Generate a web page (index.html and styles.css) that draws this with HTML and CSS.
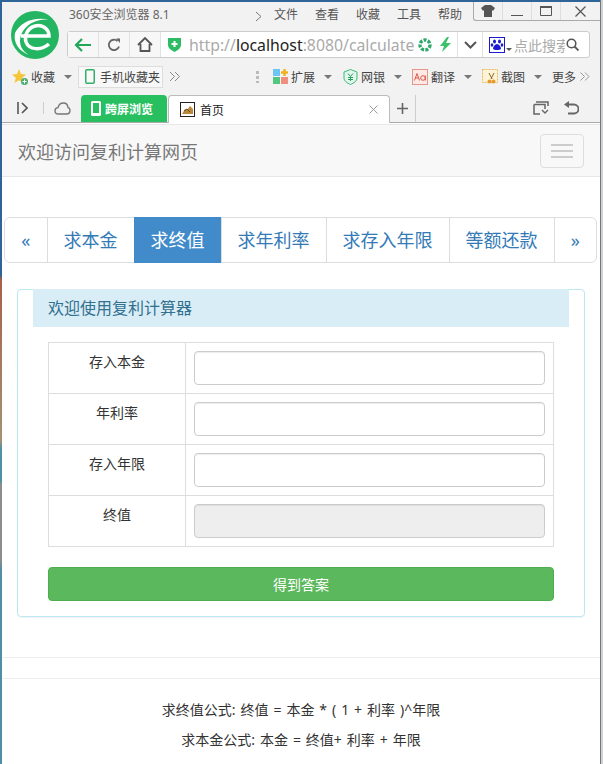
FILE: index.html
```html
<!DOCTYPE html>
<html lang="zh-CN">
<head>
    <meta charset="UTF-8">
    <meta name="viewport" content="width=device-width, initial-scale=1.0">
    <title>欢迎访问复利计算网页</title>
    <link rel="stylesheet" href="styles.css">
</head>
<body>
    <div class="edge-left"></div>
    <div class="window">
        <div class="chrome">
            <div class="top-area">
                <svg class="logo" width="48" height="48" viewBox="0 0 48 48">
                    <circle cx="24" cy="24" r="24" fill="#23b561"/>
                    <path d="M4 22C10 10 24 5 40 9C28 7 15 12 10 24C7 33 11 40 18 44C8 40 2 32 4 22Z" fill="#fff"/>
                    <path d="M10 25H38C38 17 30 13 24 15C17 17 13 24 15 31C18 39 30 40 38 33" fill="none" stroke="#fff" stroke-width="3.500"/>
                </svg>
                <div class="top-rows">
                    <div class="title-row">
                        <span class="app-name">360安全浏览器 8.1</span>
                        <span class="menu-arrow">
                            <svg width="7" height="11" viewBox="0 0 7 11"><path d="M1 1l5 4.500-5 4.500" fill="none" stroke="#777"/></svg>
                        </span>
                        <nav class="menu">
                            <span>文件</span><span>查看</span><span>收藏</span><span>工具</span><span>帮助</span>
                        </nav>
                        <div class="win-btns">
                            <div class="win-btn">
                                <svg width="14" height="12" viewBox="0 0 14 12"><path d="M4 0h6l4 3-2 3-1-1v7H3V5L2 6 0 3z" fill="#555"/></svg>
                            </div>
                            <div class="win-btn">
                                <svg width="14" height="12" viewBox="0 0 14 12"><path d="M1 10.500h12" stroke="#555"/></svg>
                            </div>
                            <div class="win-btn">
                                <svg width="14" height="12" viewBox="0 0 14 12"><path d="M1.500 1.500h11v9h-11z" fill="none" stroke="#555"/><path d="M1 2h12" stroke="#555" stroke-width="2"/></svg>
                            </div>
                            <div class="win-btn win-close">
                                <svg width="13" height="13" viewBox="0 0 13 13"><path d="M1.500 1.500l10 10M11.500 1.500l-10 10" stroke="#555" stroke-width="1.200"/></svg>
                            </div>
                        </div>
                    </div>
                    <div class="address-bar">
                        <div class="addr-btn">
                            <svg width="18" height="16" viewBox="0 0 18 16"><path d="M17 8H2M8 2L2 8l6 6" fill="none" stroke="#23a55a" stroke-width="2.200"/></svg>
                        </div>
                        <div class="addr-btn">
                            <svg width="14" height="14" viewBox="0 0 14 14"><path d="M12 8.500A5.200 5.200 0 1 1 10.500 3" fill="none" stroke="#666" stroke-width="1.800"/><path d="M9 0.500h4v4.500z" fill="#666"/></svg>
                        </div>
                        <div class="addr-btn">
                            <svg width="16" height="15" viewBox="0 0 16 15"><path d="M1 8l7-7 7 7M3.500 7v7h9V7" fill="none" stroke="#555" stroke-width="1.800"/></svg>
                        </div>
                        <div class="url-box">
                            <svg class="url-shield" width="13" height="15" viewBox="0 0 13 15"><path d="M0 1h13v7c0 3-3 5-6.500 7C3 13 0 11 0 8z" fill="#2dbb63"/><path d="M6.500 4v6M3.500 7h6" stroke="#fff" stroke-width="2"/></svg>
                            <div class="url-text"><span class="url-dim">http://</span>localhost<span class="url-dim">:8080/calculate</span></div>
                            <svg class="url-ring" width="14" height="14" viewBox="0 0 14 14"><circle cx="7" cy="7" r="5" fill="none" stroke="#2fa86a" stroke-width="3.400" stroke-dasharray="3 1.300"/></svg>
                            <svg class="url-bolt" width="13" height="15" viewBox="0 0 13 15"><path d="M8 0L1 9h4l-2 6 9-9H7l3-6z" fill="#3cc06a"/></svg>
                        </div>
                        <div class="addr-drop">
                            <svg width="13" height="8" viewBox="0 0 13 8"><path d="M1 1l5.500 5.500L12 1" fill="none" stroke="#555" stroke-width="2"/></svg>
                        </div>
                        <div class="search-box">
                            <svg class="paw" width="16" height="16" viewBox="0 0 16 16"><path d="M0 0h16v16H0z" fill="#1a1ad0"/><path d="M1 1h14v14H1z" fill="#fff"/><ellipse cx="5.500" cy="4.500" rx="1.500" ry="2" fill="#1a1ad0"/><ellipse cx="10.500" cy="4.500" rx="1.500" ry="2" fill="#1a1ad0"/><ellipse cx="3" cy="8" rx="1.300" ry="1.700" fill="#1a1ad0"/><ellipse cx="13" cy="8" rx="1.300" ry="1.700" fill="#1a1ad0"/><path d="M8 7c2 0 4 3 4 4.500S9.500 13 8 13s-4 0-4-1.500S6 7 8 7z" fill="#1a1ad0"/></svg>
                            <span class="caret caret-small"></span>
                            <div class="search-text">点此搜索</div>
                            <svg width="13" height="13" viewBox="0 0 13 13"><circle cx="5.500" cy="5.500" r="4.300" fill="none" stroke="#555" stroke-width="1.600"/><path d="M8.500 8.500l4 4" stroke="#555" stroke-width="1.800"/></svg>
                        </div>
                    </div>
                </div>
            </div>

            <div class="bookmarks">
                <div class="bm-item bm-fav">
                    <svg width="16" height="16" viewBox="0 0 16 16"><path d="M7 0l2 5 5 .5-3.800 3.300L11.500 14 7 11.200 2.500 14l1.300-5.200L0 5.500 5 5z" fill="#f5c63c"/><circle cx="12.500" cy="12.500" r="3.500" fill="#4caf6e"/><path d="M12.500 10.500v4M10.500 12.500h4" stroke="#fff"/></svg>
                    <span>收藏</span>
                    <span class="caret"></span>
                </div>
                <div class="bm-mobile">
                    <svg width="10" height="15" viewBox="0 0 10 15"><rect x=".75" y=".75" width="8.500" height="13.500" rx="1.200" fill="none" stroke="#33b068" stroke-width="1.500"/></svg>
                    <span>手机收藏夹</span>
                </div>
                <svg class="bm-arrows" width="12" height="11" viewBox="0 0 12 11"><path d="M1 1l4.500 4.500L1 10M6 1l4.500 4.500L6 10" fill="none" stroke="#888"/></svg>
                <span class="bm-dots"></span>
                <div class="bm-item bm-ext">
                    <svg width="15" height="15" viewBox="0 0 15 15"><rect width="7" height="7" fill="#6cc5f2"/><rect y="8" width="7" height="7" fill="#52c77f"/><rect x="8" y="8" width="7" height="7" fill="#ef8f7e"/><path d="M11.500 0v7M8 3.500h7" stroke="#efb21f" stroke-width="2.400"/></svg>
                    <span>扩展</span>
                    <span class="caret"></span>
                </div>
                <div class="bm-item bm-bank">
                    <svg width="15" height="16" viewBox="0 0 15 16"><path d="M7.500 .5L14 3v6c0 3-3 5-6.500 6.500C4 14 1 12 1 9V3z" fill="#e2f6ec" stroke="#3cb87a"/><path d="M5 4.500l2.500 3 2.500-3M7.500 7.500V12M5 8.500h5M5 10.500h5" fill="none" stroke="#2a9e65"/></svg>
                    <span>网银</span>
                    <span class="caret"></span>
                </div>
                <div class="bm-item bm-trans">
                    <svg width="16" height="16" viewBox="0 0 16 16"><rect x=".5" y=".5" width="15" height="15" fill="#fde9e6" stroke="#e8958a"/><path d="M2.500 11.500l2.500-7 2.500 7M3.500 9h3" fill="none" stroke="#d9594c"/><circle cx="11" cy="9" r="2.300" fill="none" stroke="#d9594c"/><path d="M13.300 6.500v5" stroke="#d9594c"/></svg>
                    <span>翻译</span>
                    <span class="caret"></span>
                </div>
                <div class="bm-item bm-shot">
                    <svg width="16" height="16" viewBox="0 0 16 16"><rect x=".5" y=".5" width="15" height="13" fill="#fdf3d8" stroke="#e8bc55" stroke-dasharray="2 1"/><path d="M7 4l3 6M12 4l-3 6" stroke="#8a6a20"/><circle cx="7.500" cy="12.500" r="2" fill="#e89a2c"/><circle cx="11.500" cy="12.500" r="2" fill="#e89a2c"/></svg>
                    <span>截图</span>
                    <span class="caret"></span>
                </div>
                <span class="bm-more">更多</span>
                <svg class="bm-more-arrows" width="10" height="9" viewBox="0 0 10 9"><path d="M.5 .5l4 4-4 4M5 .5l4 4-4 4" fill="none" stroke="#999"/></svg>
            </div>

            <div class="tabs-row">
                <svg class="tabs-toggle" width="11" height="12" viewBox="0 0 11 12"><path d="M1 0v12" stroke="#555" stroke-width="1.600"/><path d="M5 1l5 5-5 5" fill="none" stroke="#555" stroke-width="1.600"/></svg>
                <span class="tabs-sep"></span>
                <svg class="tabs-cloud" width="17" height="13" viewBox="0 0 17 13"><path d="M4.500 12C2 12 1 10.300 1 8.700 1 7 2.300 5.700 4 5.600 4.700 2.800 6.700 1 9.300 1c2.800 0 4.500 2 4.700 4.500 1.300.4 2 1.700 2 3 0 2-1.300 3.500-3.500 3.500z" fill="none" stroke="#777" stroke-width="1.400"/></svg>
                <div class="tab-green">
                    <svg width="10" height="15" viewBox="0 0 10 15"><path d="M1.500 0h7A1.500 1.500 0 0 1 10 1.500v12A1.500 1.500 0 0 1 8.500 15h-7A1.500 1.500 0 0 1 0 13.500v-12A1.500 1.500 0 0 1 1.500 0zM2 2v10h6V2z" fill="#fff"/></svg>
                    <span>跨屏浏览</span>
                </div>
                <div class="tab-page">
                    <svg width="15" height="15" viewBox="0 0 15 15"><rect x=".5" y=".5" width="14" height="14" fill="#fff" stroke="#222"/><path d="M2 12l3-5 2 1 3-4 3 3v5z" fill="#b98a3c"/><path d="M4 9l3-2 3 3" fill="none" stroke="#6b4a1a"/></svg>
                    <span class="tab-title">首页</span>
                    <svg class="tab-close" width="9" height="9" viewBox="0 0 9 9"><path d="M.5 .5l8 8M8.500 .5l-8 8" stroke="#999"/></svg>
                </div>
                <svg class="tab-add" width="11" height="11" viewBox="0 0 11 11"><path d="M5.500 0v11M0 5.500h11" stroke="#666" stroke-width="1.600"/></svg>
                <span class="tab-add-sep"></span>
                <svg class="tabs-list" width="16" height="14" viewBox="0 0 16 14"><path d="M3 1h12v4M1 3.500h11V8M1 3.500V13h6" fill="none" stroke="#666" stroke-width="1.500"/><path d="M9 9l3 3 3-3" fill="none" stroke="#666" stroke-width="1.400"/></svg>
                <svg class="tabs-undo" width="15" height="14" viewBox="0 0 15 14"><path d="M3 3.500h7a4 4 0 0 1 0 9H4" fill="none" stroke="#666" stroke-width="1.800"/><path d="M5 0L0 3.500 5 7z" fill="#666"/></svg>
            </div>
        </div>

        <header class="navbar">
            <span class="brand">欢迎访问复利计算网页</span>
            <button class="toggle" type="button">
                <span></span><span></span><span></span>
            </button>
        </header>

        <main class="page">
            <ul class="pagination">
                <li class="pg-arrow"><a>«</a></li>
                <li><a>求本金</a></li>
                <li class="active"><a>求终值</a></li>
                <li><a>求年利率</a></li>
                <li><a>求存入年限</a></li>
                <li><a>等额还款</a></li>
                <li class="pg-arrow"><a>»</a></li>
            </ul>

            <section class="panel">
                <h3 class="panel-heading">欢迎使用复利计算器</h3>
                <div class="panel-body">
                    <table class="calc-table">
                        <tr>
                            <td class="calc-label">存入本金</td>
                            <td class="calc-field"><input type="text"></td>
                        </tr>
                        <tr>
                            <td class="calc-label">年利率</td>
                            <td class="calc-field"><input type="text"></td>
                        </tr>
                        <tr>
                            <td class="calc-label">存入年限</td>
                            <td class="calc-field"><input type="text"></td>
                        </tr>
                        <tr>
                            <td class="calc-label">终值</td>
                            <td class="calc-field"><input type="text" disabled></td>
                        </tr>
                    </table>
                    <button class="btn-submit" type="button">得到答案</button>
                </div>
            </section>

            <hr class="rule-one">
            <hr class="rule-two">

            <div class="formulas">
                <p>求终值公式: 终值 = 本金 * ( 1 + 利率 )^年限</p>
                <p>求本金公式: 本金 = 终值+ 利率 + 年限</p>
            </div>
        </main>
    </div>
    <div class="edge-right"></div>
</body>
</html>
```

FILE: styles.css
```css
* {
    margin: 0;
    padding: 0;
    box-sizing: border-box;
}

html, body {
    height: 764px;
    overflow: hidden;
}

body {
    display: flex;
    width: 603px;
    background: #fff;
    color: #333;
    font-family: "Noto Sans", "Noto Sans CJK SC", sans-serif;
    font-size: 14px;
}

.edge-left {
    flex: 0 0 2px;
    background: linear-gradient(#2f6498 0, #2f6498 275px, #a9604a 280px, #a39272 440px, #4d8fa5 450px, #4d8fa5 480px, #8d8d8d 485px, #8d8d8d 560px, #4f8ea5 570px, #4f8ea5 100%);
}

.edge-right {
    flex: 0 0 3px;
    border-left: 1px solid #777;
    background: #cfd3d6;
}

.window {
    flex: 0 0 598px;
    min-width: 0;
    border-top: 2px solid #2f6498;
}

/* browser chrome */
.chrome {
    height: 121px;
    background: #f2f2f2;
    border-bottom: 1px solid #aaa;
    font-size: 12px;
    color: #444;
}

.top-area {
    display: flex;
    height: 56px;
}

.logo {
    flex: none;
    margin: 9px 0 0 9px;
}

.top-rows {
    flex: 1;
    min-width: 0;
    margin-left: 8px;
}

.title-row {
    display: flex;
    height: 29px;
    align-items: flex-start;
}

.app-name {
    width: 186px;
    margin: 4px 0 0 2px;
    color: #666;
    line-height: 18px;
}

.menu-arrow {
    width: 19px;
    margin-top: 7px;
}

.menu {
    display: flex;
    gap: 17px;
    margin-top: 4px;
    line-height: 18px;
    color: #555;
}

.win-btns {
    display: flex;
    height: 19px;
    margin-left: auto;
    border-left: 1px solid #aaa;
    border-bottom: 1px solid #aaa;
    border-bottom-left-radius: 3px;
}

.win-btn {
    display: flex;
    width: 29px;
    align-items: center;
    justify-content: center;
    border-right: 1px solid #ddd;
}

.win-close {
    width: 39px;
    border-right: 0;
}

.address-bar {
    display: flex;
    width: 523px;
    height: 27px;
    background: #fff;
    border: 1px solid #ccc;
    border-radius: 3px;
}

.addr-btn {
    display: flex;
    width: 31px;
    align-items: center;
    justify-content: center;
    border-right: 1px solid #e2e2e2;
    background: #f7f7f7;
}

.url-box {
    display: flex;
    width: 297px;
    align-items: center;
    border-right: 1px solid #e2e2e2;
    padding-left: 7px;
}

.url-text {
    width: 224px;
    margin-left: 8px;
    white-space: nowrap;
    font-size: 15.800px;
    color: #222;
}

.url-dim {
    color: #aaa;
}

.url-ring {
    margin-left: 5px;
}

.url-bolt {
    margin-left: 7px;
}

.addr-drop {
    display: flex;
    width: 25px;
    align-items: center;
    justify-content: center;
    border-right: 1px solid #e2e2e2;
}

.search-box {
    display: flex;
    flex: 1;
    align-items: center;
    padding-left: 6px;
}

.search-text {
    width: 51px;
    margin: 0 1px 0 2px;
    overflow: hidden;
    white-space: nowrap;
    font-size: 14px;
    color: #aaa;
}

.caret {
    display: inline-block;
    width: 0;
    height: 0;
    border: 4px solid transparent;
    border-top: 4px solid #777;
    border-bottom: 0;
}

.caret-small {
    margin: 10px 0 0 1px;
    border-width: 3px;
    border-bottom: 0;
    border-top-color: #555;
}

.bookmarks {
    display: flex;
    height: 33px;
    align-items: center;
    padding: 4px 0 0 10px;
}

.bm-item {
    display: flex;
    align-items: center;
}

.bm-item span:not(.caret) {
    margin-left: 3px;
}

.bm-item .caret {
    margin-left: 9px;
}

.bm-mobile {
    display: flex;
    width: 85px;
    height: 22px;
    align-items: center;
    gap: 5px;
    margin-left: 6px;
    padding-left: 6px;
    background: #f8f8f8;
    border: 1px solid #ddd;
}

.bm-arrows {
    flex: none;
    margin-left: 6px;
}

.bm-dots {
    width: 3px;
    height: 13px;
    margin-left: 75px;
    background: radial-gradient(circle, #bbb 1.500px, transparent 1.500px) 0 0 / 3px 5px;
}

.bm-ext {
    margin-left: 14px;
}

.bm-bank {
    margin-left: 11px;
}

.bm-trans {
    margin-left: 10px;
}

.bm-shot {
    margin-left: 10px;
}

.bm-more {
    margin-left: 10px;
}

.bm-more-arrows {
    flex: none;
    margin-left: 4px;
}

.tabs-row {
    display: flex;
    height: 31px;
    align-items: center;
    padding: 3px 0 0 15px;
}

.tabs-toggle {
    flex: none;
}

.tabs-sep {
    width: 1px;
    height: 12px;
    margin-left: 15px;
    background: #ccc;
}

.tabs-cloud {
    flex: none;
    margin-left: 10px;
}

.tab-green {
    display: flex;
    width: 86px;
    height: 27px;
    align-items: center;
    gap: 4px;
    margin: 0 1px 0 10px;
    padding-left: 10px;
    align-self: flex-end;
    background: #27bf5f;
    border-radius: 4px 4px 0 0;
    color: #fff;
    font-weight: 700;
}

.tab-page {
    position: relative;
    top: 1px;
    display: flex;
    width: 222px;
    height: 28px;
    align-items: center;
    align-self: flex-end;
    padding-left: 11px;
    background: #fff;
    border: 1px solid #bbb;
    border-bottom: 0;
    border-radius: 4px 4px 0 0;
    color: #222;
}

.tab-title {
    margin-left: 5px;
}

.tab-close {
    margin-left: auto;
    margin-right: 11px;
}

.tab-add {
    flex: none;
    margin-left: 7px;
}

.tab-add-sep {
    width: 1px;
    height: 27px;
    margin-left: 7px;
    align-self: flex-end;
    background: #ccc;
}

.tabs-list {
    flex: none;
    margin-left: 117px;
}

.tabs-undo {
    flex: none;
    margin-left: 15px;
}

/* page */
.navbar {
    display: flex;
    height: 53px;
    align-items: center;
    justify-content: space-between;
    margin-top: 1px;
    padding: 0 16px;
    background: #f8f8f8;
    border-top: 1px solid #e7e7e7;
    border-bottom: 1px solid #e7e7e7;
}

.brand {
    font-size: 18px;
    color: #777;
}

.toggle {
    display: flex;
    width: 44px;
    height: 34px;
    flex-direction: column;
    align-items: center;
    justify-content: center;
    gap: 4px;
    background: transparent;
    border: 1px solid #ddd;
    border-radius: 4px;
}

.toggle span {
    width: 22px;
    height: 2px;
    background: #ccc;
}

.page {
    padding-top: 40px;
}

.pagination {
    display: flex;
    height: 46px;
    margin: 0 3px 0 2px;
    list-style: none;
    font-size: 18px;
}

.pagination li {
    margin-left: -1px;
}

.pagination a {
    display: block;
    height: 46px;
    padding: 0 16px;
    background: #fff;
    border: 1px solid #ddd;
    color: #337ab7;
    line-height: 44px;
}

.pagination .pg-arrow {
    flex: 1;
    margin-left: 0;
}

.pagination .pg-arrow a {
    padding: 0;
    text-align: center;
}

.pagination .pg-arrow:first-child a {
    border-radius: 6px 0 0 6px;
}

.pagination .pg-arrow:last-child {
    margin-left: -1px;
}

.pagination .pg-arrow:last-child a {
    border-radius: 0 6px 6px 0;
}

.pagination .active a {
    background: #428bca;
    border-color: #428bca;
    color: #fff;
}

.panel {
    margin: 26px 15px 0;
    border: 1px solid #bce8f1;
    border-radius: 4px;
    box-shadow: 0 1px 1px rgba(0,0,0,.05);
}

.panel-heading {
    height: 38px;
    margin: -1px 15px 0;
    padding-left: 15px;
    background: #d9edf7;
    color: #31708f;
    font-size: 16px;
    font-weight: 400;
    line-height: 38px;
}

.panel-body {
    padding: 15px 30px 15px;
}

.calc-table {
    width: 506px;
    border-collapse: collapse;
    table-layout: fixed;
}

.calc-table td {
    height: 51px;
    border: 1px solid #ddd;
}

.calc-label {
    width: 137px;
    padding: 9px 8px 0;
    text-align: center;
    vertical-align: top;
    line-height: 20px;
}

.calc-field {
    padding: 0 8px;
}

.calc-field input {
    display: block;
    width: 100%;
    height: 34px;
    background: #fff;
    border: 1px solid #ccc;
    border-radius: 4px;
    box-shadow: inset 0 1px 1px rgba(0,0,0,.075);
}

.calc-field input:disabled {
    background: #eee;
}

.btn-submit {
    display: block;
    width: 506px;
    height: 34px;
    margin-top: 20px;
    background: #5cb85c;
    border: 1px solid #4cae4c;
    border-radius: 4px;
    color: #fff;
    font-family: inherit;
    font-size: 14px;
}

.rule-one {
    margin-top: 40px;
    border: 0;
    border-top: 1px solid #eee;
}

.rule-two {
    margin-top: 20px;
    border: 0;
    border-top: 1px solid #eee;
}

.formulas {
    padding-top: 16px;
    text-align: center;
    word-spacing: 1.300px;
}

.formulas p {
    line-height: 30px;
}
```
